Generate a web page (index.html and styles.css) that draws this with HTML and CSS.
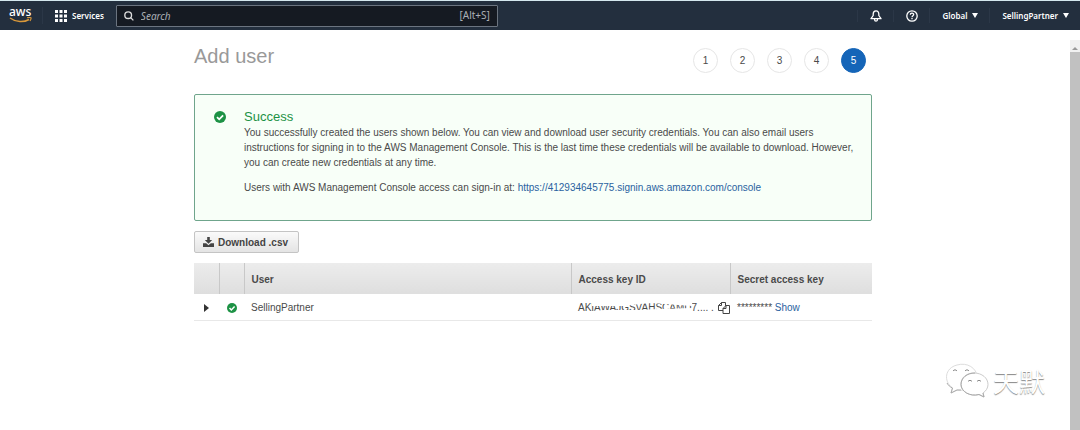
FILE: index.html
```html
<!DOCTYPE html>
<html lang="en">
<head>
  <meta charset="UTF-8" />
  <meta name="viewport" content="width=device-width, initial-scale=1.0" />
  <title>Add user - IAM Management Console</title>
  <link rel="stylesheet" href="styles.css">
</head>
<body>

  <!-- NAVBAR -->
  <nav class="navbar">
    <a href="#" class="logo" aria-label="AWS home">
      <span class="logo-text">aws</span>
      <svg class="smile" viewBox="0 0 24 7" fill="none" stroke="#d9983a">
        <path d="M1 1C7 5.500 15 5.500 20 2.500" stroke-width="1.500" />
        <path d="M18 .8c2-.4 3.500-.4 4 0 .3.700-.2 2-1 3.200" stroke-width="1.100" />
      </svg>
    </a>
    <button class="services">
      <svg width="12" height="12" viewBox="0 0 12 12" fill="#fff">
        <path d="M0 0h3v3H0zM4.500 0h3v3h-3zM9 0h3v3H9zM0 4.500h3v3H0zM4.500 4.500h3v3h-3zM9 4.500h3v3H9zM0 9h3v3H0zM4.500 9h3v3h-3zM9 9h3v3H9z" />
      </svg>
      Services
    </button>
    <div class="search">
      <svg width="10" height="10" viewBox="0 0 11 11" fill="none" stroke="#ddd" stroke-width="1.500">
        <circle cx="4.600" cy="4.600" r="3.700" />
        <path d="M7.300 7.300l3 3" />
      </svg>
      <input type="text" placeholder="Search" aria-label="Search" />
      <span class="shortcut">[Alt+S]</span>
    </div>
    <button class="nav-item" aria-label="Notifications">
      <svg width="12" height="12" viewBox="0 0 12 12" fill="none" stroke="#fff" stroke-width="1.300" stroke-linejoin="round">
        <path d="M6 .8C4 .8 3.200 2.400 3.200 4v1.500L1 8.700h10L8.800 5.500V4C8.800 2.400 8 .8 6 .8z" />
        <path d="M4.600 9v.8c0 1.800 2.800 1.800 2.800 0V9" />
      </svg>
    </button>
    <button class="nav-item" aria-label="Help">
      <svg width="12" height="12" viewBox="0 0 12 12" fill="none" stroke="#fff" stroke-width="1.300">
        <circle cx="6" cy="6" r="5.200" />
        <path d="M4.300 4.800c0-2.200 3.400-2.200 3.400-.2C7.700 5.700 6 5.700 6 7.200M6 8.100v1.200" />
      </svg>
    </button>
    <button class="nav-item">Global <span class="caret"></span></button>
    <button class="nav-item">SellingPartner <span class="caret"></span></button>
  </nav>

  <div class="page">
    <main class="content">

      <!-- TITLE AND STEPS -->
      <div class="title-row">
        <h1>Add user</h1>
        <ol class="steps">
          <li>1</li>
          <li>2</li>
          <li>3</li>
          <li>4</li>
          <li class="active">5</li>
        </ol>
      </div>

      <!-- SUCCESS MESSAGE -->
      <section class="alert">
        <svg class="check" viewBox="0 0 12 12">
          <circle cx="6" cy="6" r="6" fill="#1d9245" />
          <path d="M3 6.100l2.200 2.200L9.100 4.300" fill="none" stroke="#fff" stroke-width="1.800" />
        </svg>
        <div>
          <h2>Success</h2>
          <p>You successfully created the users shown below. You can view and download user security credentials. You can also email users instructions for signing in to the AWS Management Console. This is the last time these credentials will be available to download. However, you can create new credentials at any time.</p>
          <p>Users with AWS Management Console access can sign-in at: <a href="#">https://412934645775.signin.aws.amazon.com/console</a></p>
        </div>
      </section>

      <button class="download">
        <svg width="11" height="10" viewBox="0 0 11 10" fill="#444">
          <path d="M4.200 0h2.600v3h2.400L5.500 6.700 1.800 3h2.400z" />
          <path d="M0 6.300h3.200l2.300 2 2.300-2H11V10H0z" />
        </svg>
        Download .csv
      </button>

      <!-- USERS TABLE -->
      <table class="users">
        <thead>
          <tr>
            <th class="col-expand"></th>
            <th class="col-status"></th>
            <th>User</th>
            <th class="col-key">Access key ID</th>
            <th class="col-secret">Secret access key</th>
          </tr>
        </thead>
        <tbody>
          <tr>
            <td class="col-expand"><button class="expand" aria-label="Expand"></button></td>
            <td class="col-status">
              <svg class="check small" viewBox="0 0 12 12">
                <circle cx="6" cy="6" r="6" fill="#1d9245" />
                <path d="M3 6.100l2.200 2.200L9.100 4.300" fill="none" stroke="#fff" stroke-width="1.800" />
              </svg>
            </td>
            <td>SellingPartner</td>
            <td class="col-key">
              <div class="key">
                <span class="key-id">AKIAWAJGSVAHSCAMD7.... .
                  <svg class="redact" viewBox="0 0 142 15" fill="#fff">
                    <path d="M14 0H114V6L100 5L74 3L62 4L46 6H14z" />
                    <path d="M14 15V11L26 10H60L80 9L114 8V15z" />
                  </svg>
                </span>
                <button class="copy" aria-label="Copy">
                  <svg width="12" height="12" viewBox="0 0 12 12" fill="#fff" stroke="#444">
                    <path d="M3.500.5H7.500V8.500H.5V3.500zM3.500.5V3.500H.5" />
                    <path d="M8 3.500H11.500V11.500H5V6.500zM8 3.500V6.500H5" />
                  </svg>
                </button>
              </div>
            </td>
            <td class="col-secret">********* <a href="#">Show</a></td>
          </tr>
        </tbody>
      </table>
    </main>

    <div class="scrollbar"><span class="scroll-up"></span></div>
  </div>

  <!-- WATERMARK -->
  <div class="watermark">
    <svg width="44" height="36" viewBox="0 0 44 36" fill="#fff" stroke="#aaa">
      <path d="M6 30l1.500-5C-2 18 0 5 12 2 22-1 32 5 32 14S21 29 12 27z" stroke="#ddd" />
      <path d="M2 20c1 2 3 4 5.500 5L6 30l6-3h4" fill="none" />
      <path d="M39 34l-5-2.500C25 34 16 28.500 16 21.500 16 14 22 10 29 10c8 0 14 5 14 11.500 0 3.500-2 6.500-5 8.500z" stroke="#ccc" />
      <path d="M30 10c-8 0-14 5-14 11.500C16 28.500 25 34 34 31.500l5 2.500-1-4" fill="none" />
      <path d="M8 8c1-1.500 3-1.500 4 0M20 8c1-1.500 3-1.500 4 0M23 18.500c1-1.500 3-1.500 4 0M32 18.500c1-1.500 3-1.500 4 0" fill="none" stroke="#888" />
    </svg>
    <span>天默</span>
  </div>

</body>
</html>
```
FILE: styles.css
```css
/* Global Styles */
* { box-sizing: border-box; margin: 0; padding: 0; }

body {
  display: flex;
  flex-direction: column;
  min-height: 100vh;
  background-color: #fff;
  font-family: "Liberation Sans", Arial, sans-serif;
  color: #4a4a4a;
  font-size: 10px;
  line-height: 15px;
}

a { color: #2a62a0; text-decoration: none; }

button { font: inherit; border: none; background: none; cursor: pointer; }

svg { display: block; flex: none; }

/* Navbar */
.navbar {
  display: flex;
  align-items: center;
  height: 30px;
  background-color: #232f3e;
  border-top: 1px solid #d5e8ee;
  color: #fff;
  font-family: "Noto Sans", "Open Sans", sans-serif;
  font-size: 8px;
  font-weight: 600;
}

.logo {
  width: 43px;
  padding-left: 9px;
  border-right: 1px solid #2b3747;
  color: #fff;
}

.logo-text {
  display: block;
  font-size: 12px;
  line-height: 10px;
  font-weight: 500;
}

.smile { width: 24px; height: 7px; }

.services {
  display: flex;
  align-items: center;
  gap: 5px;
  margin: 0 12px;
  color: #fff;
}

.search {
  display: flex;
  align-items: center;
  gap: 7px;
  flex: 0 1 382px;
  height: 22px;
  padding: 0 7px;
  margin-right: auto;
  background-color: #151a22;
  border: 1px solid #6b7480;
  border-radius: 1px;
}

.search input {
  flex: 1;
  min-width: 0;
  border: none;
  outline: none;
  background: none;
  color: #fff;
  font: italic 10px "Noto Sans", sans-serif;
}

.search input::placeholder { color: #aab0b5; }

.shortcut { color: #aab0b5; font-size: 10px; font-weight: normal; }

.nav-item {
  display: flex;
  align-items: center;
  gap: 5px;
  padding: 0 11px 0 12px;
  border-left: 1px solid #2b3747;
  color: #fff;
}

.caret {
  border: 3px solid transparent;
  border-top: 5px solid #fff;
  border-bottom: none;
}

/* Page */
.page { display: flex; flex: 1; }

.content {
  width: 100%;
  max-width: 678px;
  margin: 0 auto;
  padding-top: 12px;
}

.title-row {
  display: flex;
  justify-content: space-between;
  padding-right: 6px;
  margin-bottom: 21px;
}

h1 {
  font-size: 20px;
  line-height: 28px;
  font-weight: normal;
  color: #999;
}

.steps {
  display: flex;
  gap: 12px;
  padding-top: 6px;
  list-style: none;
}

.steps li {
  width: 25px;
  height: 25px;
  border: 1px solid #e6e6e6;
  border-radius: 50%;
  line-height: 23px;
  text-align: center;
}

.steps .active {
  background-color: #1565b8;
  border-color: #1565b8;
  color: #fff;
}

/* Success message */
.alert {
  display: flex;
  gap: 18px;
  padding: 13px 12px 25px 19px;
  margin-bottom: 10px;
  background-color: #f8fff8;
  border: 1px solid #6fa58c;
  border-radius: 2px;
}

.alert h2 {
  font-size: 13px;
  line-height: 17px;
  font-weight: normal;
  color: #1d9245;
}

.alert p + p { margin-top: 10px; }

.check { width: 12px; height: 12px; margin-top: 3px; }

.check.small { width: 10px; height: 10px; margin: 0 auto; }

/* Download button */
.download {
  display: flex;
  align-items: center;
  gap: 4px;
  height: 22px;
  padding: 0 10px 0 8px;
  margin-bottom: 10px;
  background: linear-gradient(#fafafa, #e4e4e4);
  border: 1px solid #c4c4c4;
  border-radius: 2px;
  color: #444;
  font-weight: bold;
}

/* Users table */
.users {
  width: 100%;
  table-layout: fixed;
  border-collapse: collapse;
  border-bottom: 1px solid #e8e8e8;
}

.users th {
  height: 31px;
  padding: 1px 7px 0;
  background: linear-gradient(#ececec, #dedede);
  border-left: 1px solid #c8c8c8;
  text-align: left;
}

.users th:first-child { border-left: none; }

.users td { height: 26px; padding: 2px 7px 0; }

.users .col-expand { width: 25px; }
.users .col-status { width: 25px; }
.users .col-key { width: 159px; }
.users .col-secret { width: 142px; }

.users td.col-key { padding-right: 0; }
.users td.col-expand { padding-left: 10px; }

.expand {
  display: block;
  border: 4px solid transparent;
  border-left: 5px solid #333;
  border-right: none;
}

.key { display: flex; align-items: center; }

.key-id { position: relative; width: 142px; white-space: nowrap; }

/* Covers most of the key */
.redact { position: absolute; left: 0; top: 0; width: 142px; height: 15px; }

/* Scrollbar */
.scrollbar {
  width: 10px;
  margin: 10px 0 0 4px;
  background-color: #c1c1c1;
}

.scroll-up {
  display: flex;
  justify-content: center;
  height: 12px;
  padding-top: 4px;
  background-color: #f1f1f1;
}

.scroll-up::before {
  content: "";
  height: 3px;
  border: 3px solid transparent;
  border-top: none;
  border-bottom-color: #999;
}

/* Watermark */
.watermark {
  position: absolute;
  right: 35px;
  bottom: 31px;
  display: flex;
  align-items: center;
  gap: 4px;
  color: #fff;
  font-family: "Noto Sans CJK SC", sans-serif;
  font-size: 26px;
  line-height: 36px;
  text-shadow: 0 1px 1px #888;
}
```
